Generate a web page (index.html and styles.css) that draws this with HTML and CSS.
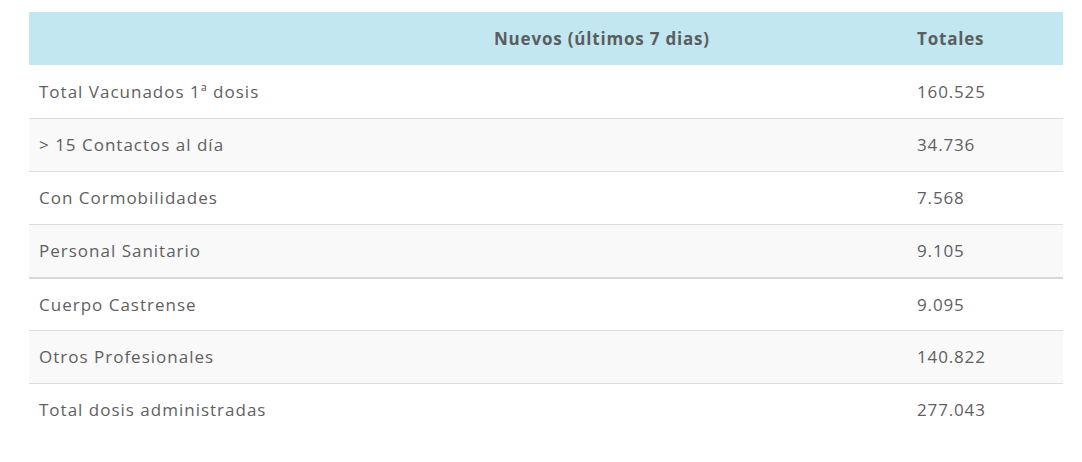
FILE: index.html
```html
<!DOCTYPE html>
<html lang="es">
<head>
<meta charset="utf-8">
<link rel="stylesheet" href="styles.css">
</head>
<body>
<div class="wrap">
<table class="vac">
  <colgroup>
    <col class="c1"><col class="c2"><col class="c3">
  </colgroup>
  <thead>
    <tr><th></th><th>Nuevos (últimos 7 dias)</th><th>Totales</th></tr>
  </thead>
  <tbody>
    <tr><td>Total Vacunados 1ª dosis</td><td></td><td>160.525</td></tr>
    <tr><td>&gt; 15 Contactos al día</td><td></td><td>34.736</td></tr>
    <tr><td>Con Cormobilidades</td><td></td><td>7.568</td></tr>
    <tr class="thick"><td>Personal Sanitario</td><td></td><td>9.105</td></tr>
    <tr><td>Cuerpo Castrense</td><td></td><td>9.095</td></tr>
    <tr><td>Otros Profesionales</td><td></td><td>140.822</td></tr>
    <tr><td>Total dosis administradas</td><td></td><td>277.043</td></tr>
  </tbody>
</table>
</div>
</body>
</html>
```
FILE: styles.css
```css
html, body { margin: 0; padding: 0; background: #fff; }
.wrap { padding: 12px 19px 0 29px; }
.vac {
  width: 1034px;
  border-collapse: collapse;
  font-family: "Open Sans", "Noto Sans", sans-serif;
  font-size: 17px;
  color: #5f5f5f;
}
.c1 { width: 455px; }
.c2 { width: 423px; }
.c3 { width: 156px; }
.vac th {
  background: #c2e7f0;
  height: 53px;
  padding: 0 10px;
  text-align: left;
  font-weight: 700;
  color: #5a5e60;
  letter-spacing: 0.8px;
}
.vac td {
  height: 52px;
  padding: 0 10px;
  border-top: 1px solid #dddddd;
  letter-spacing: 1px;
  line-height: 20px;
}
.vac td:last-child { letter-spacing: 0.85px; }
.vac tbody tr:first-child td { border-top: none; height: 53px; }
.vac tbody tr:nth-child(even) td { background: #f9f9f9; }
.vac tbody tr.thick td { border-bottom: 2px solid #d8d8d8; }
.vac tbody tr.thick + tr td { border-top: none; height: 51px; }
```
